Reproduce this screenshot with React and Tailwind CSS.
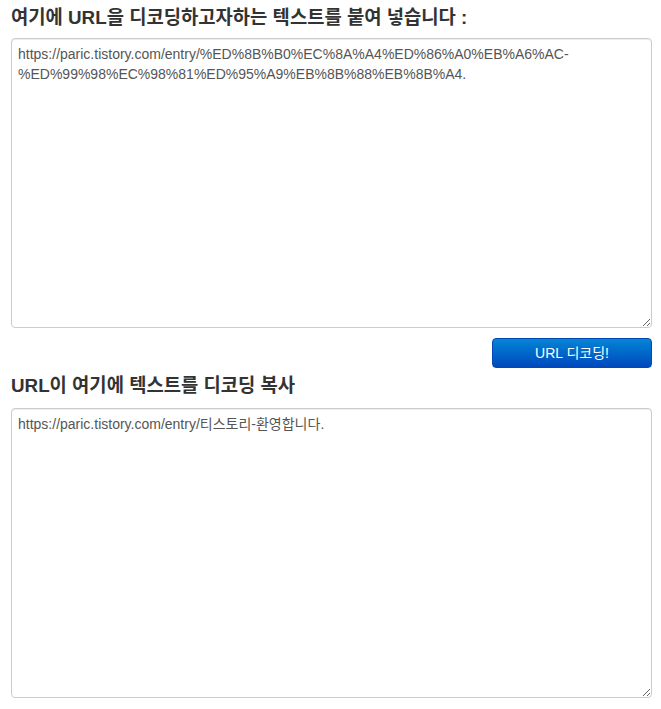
const encoded = "https://paric.tistory.com/entry/%ED%8B%B0%EC%8A%A4%ED%86%A0%EB%A6%AC-%ED%99%98%EC%98%81%ED%95%A9%EB%8B%88%EB%8B%A4.";
const decoded = "https://paric.tistory.com/entry/티스토리-환영합니다.";

const font = "font-['Liberation_Sans','Noto_Sans_CJK_KR',sans-serif]";

export default function App() {
  return (
    <div className={`w-[661px] pl-[11px] pr-[9px] pt-[7px] bg-white text-[#333] ${font}`}>
      <h2 className="text-[18.8px] leading-[22px] font-bold mb-[9px]">
        여기에 URL을 디코딩하고자하는 텍스트를 붙여 넣습니다 :
      </h2>
      <textarea
        readOnly
        defaultValue={encoded}
        className="block w-full h-[290px] border border-[#ccc] rounded-[4px] px-[6px] py-[5px] text-[14px] leading-[20px] text-[#555] bg-white outline-none resize-y shadow-[inset_0_1px_1px_rgba(0,0,0,0.075)]"
      />
      <div className="flex justify-end mt-[10px]">
        <button className="w-[160px] h-[30px] rounded-[4px] border border-[#0049b0] bg-gradient-to-b from-[#0a84d6] to-[#0048bd] text-white text-[14px]">
          URL 디코딩!
        </button>
      </div>
      <h2 className="text-[18.8px] leading-[22px] font-bold mt-[7px] mb-[11px]">
        URL이 여기에 텍스트를 디코딩 복사
      </h2>
      <textarea
        readOnly
        defaultValue={decoded}
        className="block w-full h-[290px] border border-[#ccc] rounded-[4px] px-[6px] py-[5px] text-[14px] leading-[20px] text-[#555] bg-white outline-none resize-y shadow-[inset_0_1px_1px_rgba(0,0,0,0.075)]"
      />
    </div>
  );
}
